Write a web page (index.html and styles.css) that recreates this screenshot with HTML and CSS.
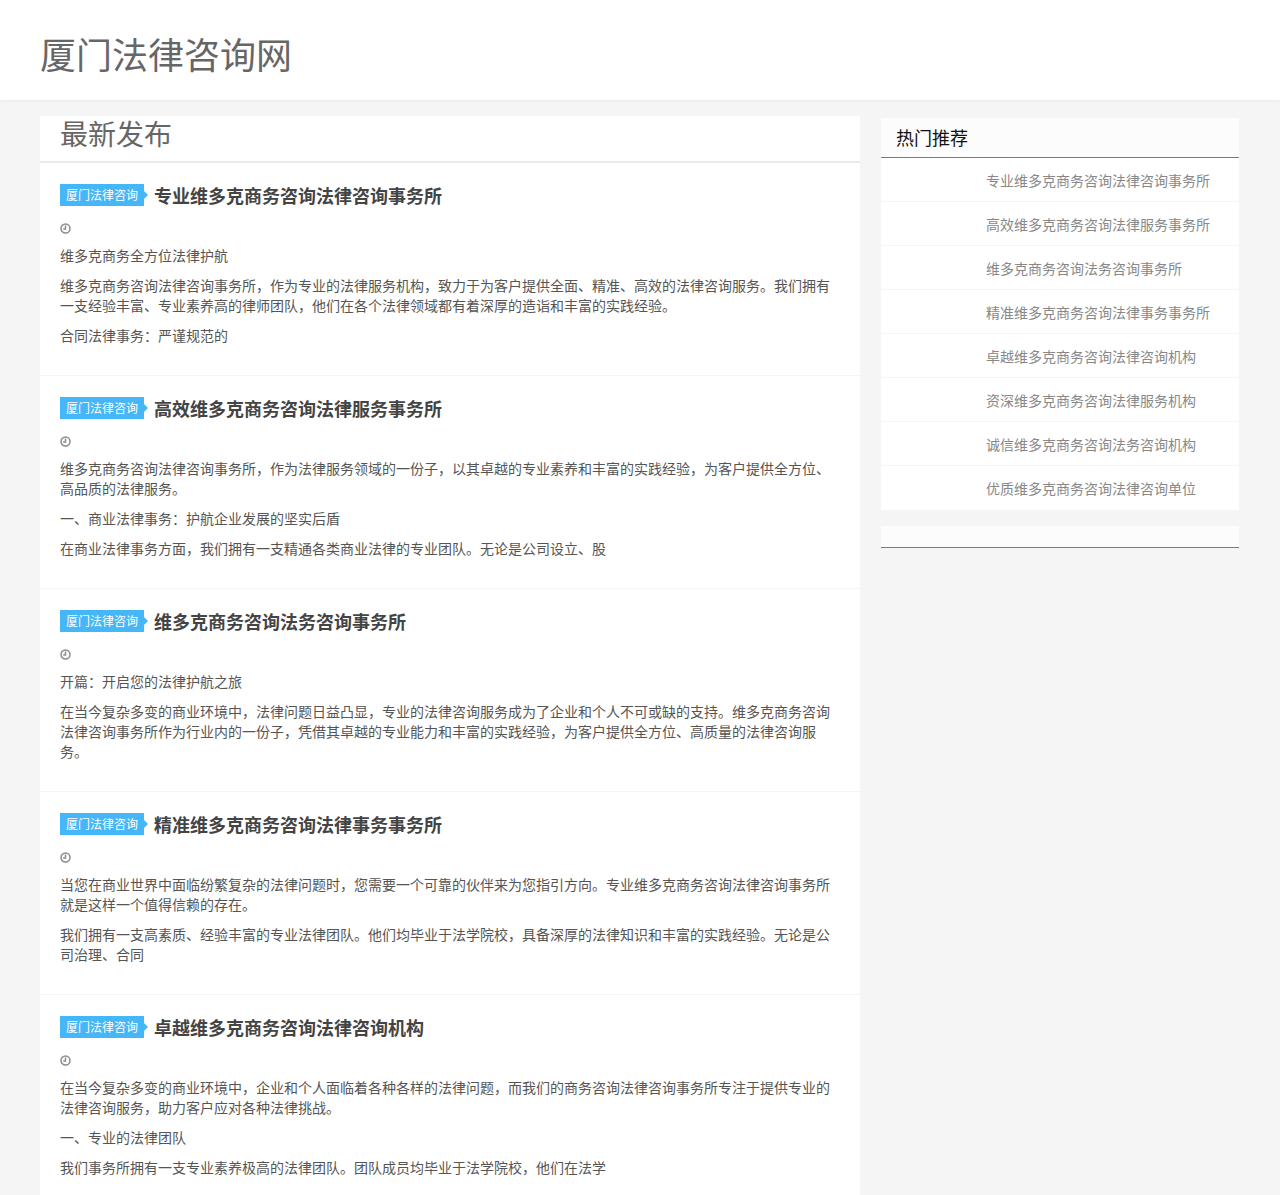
FILE: index.html
```html
<!DOCTYPE html>
<html lang="zh-CN">
<head>
  <meta charset="UTF-8" />
  <meta name="viewport" content="width=device-width, initial-scale=1.0"/>
  <title>厦门法律咨询网</title>
  <link rel="stylesheet" href="styles.css">
</head>
<body>
  <header class="site-header">
    <h1>厦门法律咨询网</h1>
  </header>

  <div class="container">
    <main class="content">
      <h2 class="content-title">最新发布</h2>

      <article class="post">
        <header class="post-head">
          <a class="cat" href="#">厦门法律咨询</a>
          <h3>专业维多克商务咨询法律咨询事务所</h3>
        </header>
        <div class="meta"><svg viewBox="0 0 11 11"><circle cx="5.5" cy="5.5" r="4.5"/><path d="M5.5 2.6V6H3.2"/></svg></div>
        <p>维多克商务全方位法律护航</p>
        <p>维多克商务咨询法律咨询事务所，作为专业的法律服务机构，致力于为客户提供全面、精准、高效的法律咨询服务。我们拥有一支经验丰富、专业素养高的律师团队，他们在各个法律领域都有着深厚的造诣和丰富的实践经验。</p>
        <p>合同法律事务：严谨规范的</p>
      </article>

      <article class="post">
        <header class="post-head">
          <a class="cat" href="#">厦门法律咨询</a>
          <h3>高效维多克商务咨询法律服务事务所</h3>
        </header>
        <div class="meta"><svg viewBox="0 0 11 11"><circle cx="5.5" cy="5.5" r="4.5"/><path d="M5.5 2.6V6H3.2"/></svg></div>
        <p>维多克商务咨询法律咨询事务所，作为法律服务领域的一份子，以其卓越的专业素养和丰富的实践经验，为客户提供全方位、高品质的法律服务。</p>
        <p>一、商业法律事务：护航企业发展的坚实后盾</p>
        <p>在商业法律事务方面，我们拥有一支精通各类商业法律的专业团队。无论是公司设立、股</p>
      </article>

      <article class="post">
        <header class="post-head">
          <a class="cat" href="#">厦门法律咨询</a>
          <h3>维多克商务咨询法务咨询事务所</h3>
        </header>
        <div class="meta"><svg viewBox="0 0 11 11"><circle cx="5.5" cy="5.5" r="4.5"/><path d="M5.5 2.6V6H3.2"/></svg></div>
        <p>开篇：开启您的法律护航之旅</p>
        <p>在当今复杂多变的商业环境中，法律问题日益凸显，专业的法律咨询服务成为了企业和个人不可或缺的支持。维多克商务咨询法律咨询事务所作为行业内的一份子，凭借其卓越的专业能力和丰富的实践经验，为客户提供全方位、高质量的法律咨询服务。</p>
      </article>

      <article class="post">
        <header class="post-head">
          <a class="cat" href="#">厦门法律咨询</a>
          <h3>精准维多克商务咨询法律事务事务所</h3>
        </header>
        <div class="meta"><svg viewBox="0 0 11 11"><circle cx="5.5" cy="5.5" r="4.5"/><path d="M5.5 2.6V6H3.2"/></svg></div>
        <p>当您在商业世界中面临纷繁复杂的法律问题时，您需要一个可靠的伙伴来为您指引方向。专业维多克商务咨询法律咨询事务所就是这样一个值得信赖的存在。</p>
        <p>我们拥有一支高素质、经验丰富的专业法律团队。他们均毕业于法学院校，具备深厚的法律知识和丰富的实践经验。无论是公司治理、合同</p>
      </article>

      <article class="post">
        <header class="post-head">
          <a class="cat" href="#">厦门法律咨询</a>
          <h3>卓越维多克商务咨询法律咨询机构</h3>
        </header>
        <div class="meta"><svg viewBox="0 0 11 11"><circle cx="5.5" cy="5.5" r="4.5"/><path d="M5.5 2.6V6H3.2"/></svg></div>
        <p>在当今复杂多变的商业环境中，企业和个人面临着各种各样的法律问题，而我们的商务咨询法律咨询事务所专注于提供专业的法律咨询服务，助力客户应对各种法律挑战。</p>
        <p>一、专业的法律团队</p>
        <p>我们事务所拥有一支专业素养极高的法律团队。团队成员均毕业于法学院校，他们在法学</p>
      </article>
    </main>

    <aside class="sidebar">
      <section class="widget">
        <h3 class="widget-title">热门推荐</h3>
        <ul class="hot-list">
          <li><a href="#">专业维多克商务咨询法律咨询事务所</a></li>
          <li><a href="#">高效维多克商务咨询法律服务事务所</a></li>
          <li><a href="#">维多克商务咨询法务咨询事务所</a></li>
          <li><a href="#">精准维多克商务咨询法律事务事务所</a></li>
          <li><a href="#">卓越维多克商务咨询法律咨询机构</a></li>
          <li><a href="#">资深维多克商务咨询法律服务机构</a></li>
          <li><a href="#">诚信维多克商务咨询法务咨询机构</a></li>
          <li><a href="#">优质维多克商务咨询法律咨询单位</a></li>
        </ul>
      </section>
      <section class="widget">
        <h3 class="widget-title empty"></h3>
      </section>
    </aside>
  </div>
</body>
</html>
```

FILE: styles.css
```css
* { box-sizing: border-box; }
html, body { height: 1195px; overflow: hidden; }
body { margin: 0; background: #f5f5f5; color: #555; font-family: "Noto Sans CJK SC", "Liberation Sans", sans-serif; font-size: 14px; line-height: 20px; }
a { color: inherit; text-decoration: none; }
h1, h2, h3, p, ul { margin: 0; padding: 0; font-weight: normal; }

.site-header { height: 100px; padding: 6px 40px 0; background: #fff; box-shadow: 0 1px 3px rgba(0,0,0,.05); display: flex; align-items: center; }
.site-header h1 { font-size: 36px; line-height: 50px; color: #666; }

.container { display: flex; align-items: flex-start; gap: 21px; margin: 16px 41px 0 40px; }
.content { width: 820px; flex: none; }
.content-title { height: 47px; padding-left: 20px; background: #fff; border-bottom: 2px solid #eaeaea; font-size: 28px; line-height: 34px; color: #666; }

.post { padding: 20px 30px 20px 20px; background: #fff; border-bottom: 1px solid #f5f5f5; }
.post:last-child { border-bottom: 0; }
.post-head { display: flex; align-items: center; height: 24px; }
.post-head h3 { font-size: 18px; font-weight: bold; line-height: 24px; color: #444; }
.cat { position: relative; height: 22px; margin-right: 10px; padding: 0 6px; background: #45b6f7; color: #fff; font-size: 12px; line-height: 22px; }
.cat::after { content: ""; position: absolute; left: 100%; top: 7px; border: 4px solid transparent; border-left-color: #45b6f7; }

.meta { display: flex; align-items: center; height: 38px; padding-top: 5px; }
.meta svg { width: 11px; height: 11px; fill: none; stroke: #8c8c8c; stroke-width: 1.5; }
.post p { margin-bottom: 10px; }

.sidebar { flex: 1; padding-top: 2px; }
.widget { margin-bottom: 16px; }
.widget-title { height: 40px; padding-left: 15px; background: #fcfcfc; border-bottom: 1px solid #cc5a45; font-size: 18px; line-height: 39px; color: #111; }
.widget-title.empty { height: 22px; }
.hot-list { list-style: none; background: #fff; }
.hot-list li { height: 44px; padding-left: 105px; border-bottom: 1px solid #f5f5f5; color: #888; line-height: 45px; }
.hot-list li:last-child { border-bottom: 0; }
```
